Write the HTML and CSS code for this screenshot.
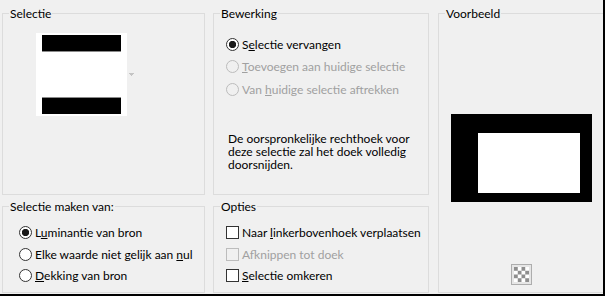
FILE: index.html
```html
<!DOCTYPE html>
<html lang="nl">
<head>
   <meta charset="UTF-8">
   <title>Selectie</title>
   <link rel="stylesheet" href="styles.css">
</head>

<body>
   <div class="dialog">

      <fieldset class="group">
         <legend>Selectie</legend>
         <div class="thumbrow">
            <div class="thumb">
               <div class="bar top"></div>
               <div class="bar bottom"></div>
            </div>
            <svg class="drop" width="5" height="3" viewBox="0 0 5 3">
               <rect x="0" y="0" width="5" height="1" fill="#c4c4c4"/>
               <rect x="1" y="1" width="3" height="1" fill="#c4c4c4"/>
               <rect x="2" y="2" width="1" height="1" fill="#c4c4c4"/>
            </svg>
         </div>
      </fieldset>

      <fieldset class="group edit">
         <legend>Bewerking</legend>
         <div class="opts">
            <div class="opt"><span class="radio on"></span><span>S<u>e</u>lectie vervangen</span></div>
            <div class="opt off"><span class="radio"></span><span><u>T</u>oevoegen aan huidige selectie</span></div>
            <div class="opt off"><span class="radio"></span><span>Van <u>h</u>uidige selectie aftrekken</span></div>
         </div>
         <p class="note">De oorspronkelijke rechthoek voor<br>deze selectie zal het doek volledig<br>doorsnijden.</p>
      </fieldset>

      <fieldset class="group preview">
         <legend>Voorbeeld</legend>
         <div class="canvas">
            <div class="sel"></div>
         </div>
         <div class="checker"><div class="tiles"></div></div>
      </fieldset>

      <fieldset class="group source">
         <legend>Selectie maken van:</legend>
         <div class="opts low">
            <div class="opt"><span class="radio on"></span><span>L<u>u</u>minantie van bron</span></div>
            <div class="opt"><span class="radio"></span><span>Elke waarde niet gelijk aan <u>n</u>ul</span></div>
            <div class="opt"><span class="radio"></span><span><u>D</u>ekking van bron</span></div>
         </div>
      </fieldset>

      <fieldset class="group edit">
         <legend>Opties</legend>
         <div class="opts low">
            <div class="opt"><span class="check"></span><span>Naar <u>l</u>inkerbovenhoek verplaatsen</span></div>
            <div class="opt off"><span class="check"></span><span>Af<u>k</u>nippen tot doek</span></div>
            <div class="opt"><span class="check"></span><span><u>S</u>electie omkeren</span></div>
         </div>
      </fieldset>

   </div>
</body>
</html>
```

FILE: styles.css
```css
* {
   font-family: 'Lato', 'Noto Sans', sans-serif;
   font-size: 12px;
   box-sizing: border-box;
}

html,
body {
   margin: 0;
   padding: 0;
   background: #f0f0f0;
   color: #000;
}

.dialog {
   width: 605px;
   height: 296px;
   padding: 6px 0 0 2px;
   border-right: 2px solid #000;
   border-bottom: 2px solid #000;
   background: #f0f0f0;
   display: grid;
   grid-template-columns: 203px 216px 1fr;
   grid-template-rows: 189px 94px;
   column-gap: 8px;
   row-gap: 4px;
   overflow: hidden;
}

.group {
   margin: 0;
   padding: 0 6px;
   min-width: 0;
   border: 1px solid #dcdcdc;
}

.group legend {
   padding: 0 1px;
   line-height: 15px;
}

/* Selectie */
.thumbrow {
   display: flex;
   align-items: center;
   padding: 12px 0 0 27px;
}

.thumb {
   width: 91px;
   height: 83px;
   background: #fff;
   padding: 2px 6px;
   display: flex;
   flex-direction: column;
   justify-content: space-between;
}

.bar {
   height: 17px;
   background: #000;
}

.bar.top {
   border-bottom: 1px solid #8a8a8a;
}

.bar.bottom {
   border-top: 1px solid #8a8a8a;
}

.drop {
   display: block;
   margin-left: 2px;
}

/* Opties en radioknoppen */
.opts {
   padding: 12px 0 0 6px;
}

.opts.low {
   padding-top: 8px;
}

.source .opts {
   padding-left: 10px;
}

.opt {
   display: flex;
   align-items: center;
   gap: 3px;
   height: 22.5px;
   white-space: nowrap;
}

.low .opt {
   height: 21.5px;
}

.opt u {
   text-decoration: underline;
   text-underline-offset: 1px;
}

.opt.off {
   color: #a0a0a0;
}

.radio,
.check {
   flex: none;
   width: 13px;
   height: 13px;
   border: 1px solid #333;
   background: #fff;
}

.radio {
   border-radius: 50%;
}

.radio.on {
   background: radial-gradient(circle, #1a1a1a 0 3.4px, #fff 3.9px);
}

.off .radio,
.off .check {
   border-color: #bcbcbc;
   background: #f0f0f0;
}

.note {
   margin: 31px 0 0 8px;
   line-height: 13px;
}

/* Voorbeeld */
.preview {
   grid-row: 1 / 3;
   grid-column: 3;
   margin: 0 -2px 0 1px;
   display: flex;
   flex-direction: column;
   align-items: center;
}

.canvas {
   width: 141px;
   height: 88px;
   margin-top: 93px;
   padding: 19px 12px 9px 27px;
   background: #000;
}

.sel {
   width: 100%;
   height: 100%;
   background: #fff;
}

.checker {
   width: 21px;
   height: 21px;
   margin-top: 62px;
   padding: 2px;
   border: 1px solid #adadad;
   background: #e6e6e6;
}

.tiles {
   width: 100%;
   height: 100%;
   background: conic-gradient(#fff 0 25%, #8e8e8e 0 50%, #fff 0 75%, #8e8e8e 0);
   background-size: 7.5px 7.5px;
}
```
